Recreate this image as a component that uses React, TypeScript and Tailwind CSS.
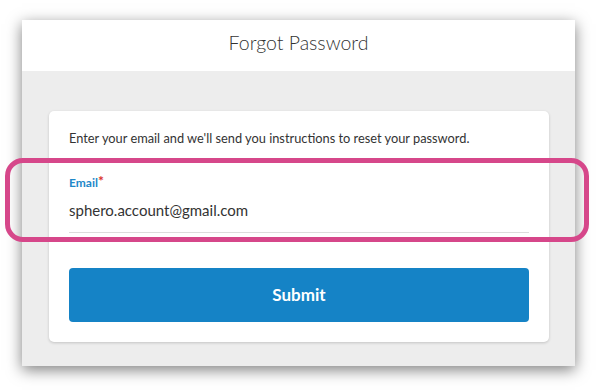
import React from "react";

export default function App() {
  return (
    <div
      className="relative w-[597px] h-[390px] overflow-hidden bg-white"
      style={{ fontFamily: "Lato, 'Open Sans', sans-serif" }}
    >
      <div className="ml-[22px] mt-[20px] w-[553px] h-[346px] flex flex-col bg-[#ededed] shadow-[0_4px_14px_rgba(0,0,0,0.5)]">
        <div className="h-[51px] bg-white flex items-center justify-center pb-[5px]">
          <span className="text-[19.5px] font-light text-[#333]">Forgot Password</span>
        </div>
        <div className="flex-1 pt-[40px] px-[27px]">
          <div className="w-[500px] h-[231px] bg-white rounded-[5px] shadow-[0_1px_3px_rgba(0,0,0,0.18)] px-[20px] pt-[19px] flex flex-col">
            <p className="text-[12.8px] leading-[16px] text-[#333]">
              Enter your email and we'll send you instructions to reset your password.
            </p>
            <div className="mt-[30px] flex items-start">
              <span className="text-[12px] leading-[14px] font-bold text-[#1e88c9]">Email</span>
              <span className="text-[14px] leading-[10px] font-bold text-[#d9302c]">*</span>
            </div>
            <div className="mt-[11px] text-[15px] leading-[18px] text-[#333]">sphero.account@gmail.com</div>
            <div className="mt-[13px] h-px bg-[#dcdcdc]" />
            <button className="mt-[35px] h-[54px] w-full rounded-[4px] bg-[#1583c6] text-white text-[17px] font-bold">
              Submit
            </button>
          </div>
        </div>
      </div>
      <div className="absolute left-[5px] top-[158px] w-[584px] h-[84px] rounded-[18px] border-[5px] border-[#d6478a]" />
    </div>
  );
}
